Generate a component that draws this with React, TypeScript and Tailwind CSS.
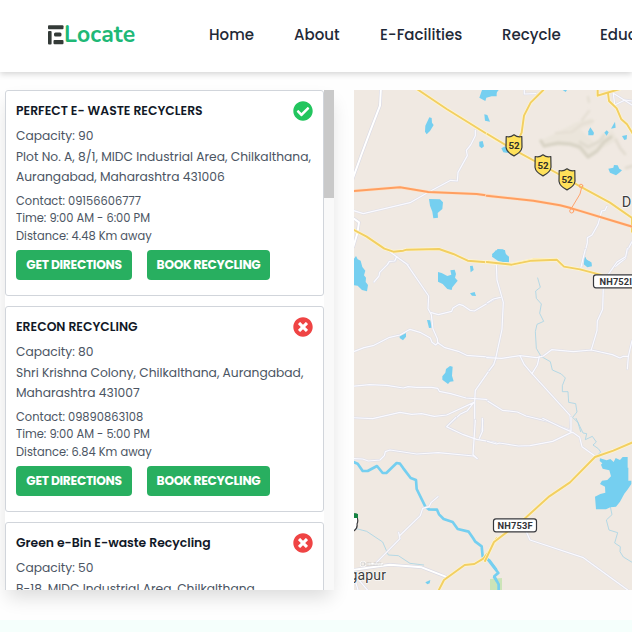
import { FaCheckCircle, FaTimesCircle } from "react-icons/fa";

type Facility = {
  name: string;
  open: boolean;
  capacity: number;
  address: string[];
  contact: string;
  time: string;
  distance: string;
};

const facilities: Facility[] = [
  {
    name: "PERFECT E- WASTE RECYCLERS",
    open: true,
    capacity: 90,
    address: ["Plot No. A, 8/1, MIDC Industrial Area, Chilkalthana,", "Aurangabad, Maharashtra 431006"],
    contact: "09156606777",
    time: "9:00 AM - 6:00 PM",
    distance: "4.48",
  },
  {
    name: "ERECON RECYCLING",
    open: false,
    capacity: 80,
    address: ["Shri Krishna Colony, Chilkalthana, Aurangabad,", "Maharashtra 431007"],
    contact: "09890863108",
    time: "9:00 AM - 5:00 PM",
    distance: "6.84",
  },
  {
    name: "Green e-Bin E-waste Recycling",
    open: false,
    capacity: 50,
    address: ["B-18, MIDC Industrial Area, Chilkalthana,", "Aurangabad, Maharashtra 431006"],
    contact: "09325373737",
    time: "9:00 AM - 6:00 PM",
    distance: "7.12",
  },
];

const navItems = [
  { label: "Home", width: "w-[45px]" },
  { label: "About", width: "w-[46px]" },
  { label: "E-Facilities", width: "w-[82px]" },
  { label: "Recycle", width: "w-[58px]" },
  { label: "Education", width: "w-[80px]" },
];

// The map is traced in six tiles, each at three units per pixel.
type Tile = { at: string; major?: string[]; minor?: string[]; yellow?: string[]; orange?: string[]; water?: string[]; river?: string[]; stream?: string[] };

const tiles: Tile[] = [
  {
    at: "translate(-4 -5) scale(0.33333)",
    major: ["M93 5L90 62L60 140L35 207L8 282", "M8 398L27 412L22 445L10 485"],
    minor: ["M376 135V152L362 180L349 196L352 212L324 262L322 288L302 286L235 322L180 353L40 386L8 376", "M112 540L120 530L136 528L138 515L176 540"],
    yellow: ["M190 5L205 15L290 72L440 165", "M8 433L50 455L103 491L130 500L160 497L170 494L267 492L310 507L353 527L438 534"],
    orange: ["M8 318L150 307L235 321L380 327L440 335"],
    water: [
      "M238 97L245 99L246 113L251 120L240 138L230 148L225 140L226 122Z",
      "M237 342L270 343L279 352L277 372L263 384L264 398L250 400L247 380L240 362Z",
      "M396 15H440V34H425L409 38L406 48L388 38Z",
      "M403 88L412 90L420 110L405 107Z",
      "M388 170L398 168L402 184L395 190L388 184Z",
    ],
  },
  {
    at: "translate(136 -5) scale(0.33333)",
    minor: ["M103 12V27L138 26", "M370 25L374 60L405 45L426 48", "M370 25L426 60", "M351 364L345 376L335 378L324 418L306 450L292 458L292 474L280 520L277 542", "M426 470L413 494L406 520L375 545"],
    yellow: ["M82 170L95 143L102 92L122 53L160 15", "M323 12V32L349 24L390 12", "M354 24L357 48L380 70L394 103L411 118L430 149", "M-8 147L60 188L200 264L270 304L360 353L426 399V440", "M-5 530L60 539L130 524H200L215 540"],
    orange: ["M-10 332L130 347L210 361L245 370L430 426"],
    water: [
      "M-8 15H26L14 31L-5 26Z",
      "M218 15H231L227 21Z",
      "M301 127L312 143L310 151H295V139Z",
      "M375 110L377 128L363 131Z",
      "M343 143L350 136L356 142L350 152Z",
      "M396 153L411 150L410 163L403 165Z",
      "M355 251L370 248L372 240L383 241L388 251L396 256L388 263L378 271L360 263Z",
      "M34 190L45 184L58 205L40 202Z",
      "M8 505L20 500L22 492L40 493L47 507L57 520V532L30 532L6 515Z",
      "M282 509L290 524L304 532V540L280 535Z",
    ],
  },
  {
    at: "translate(-4 160) scale(0.33333)",
    minor: [
      "M72 96L87 78L89 67L112 44L118 34L134 33L140 20",
      "M112 0L140 20L171 43L236 138L234 176L244 194L249 237L262 266L263 278L285 293L325 304L350 316L440 323",
      "M244 188L265 194L305 184L309 174L328 163L340 167L360 181L373 183L438 145",
      "M8 306L42 293L72 286L116 263L150 255L180 238L210 247L241 264L246 277L257 285L264 278",
      "M8 409L58 404L110 406L160 414L174 410L200 412H245L263 415L268 424L302 431L348 444L408 448L438 470",
      "M440 320L430 344L376 421L374 455V545",
      "M8 503L68 506L150 487L185 493L215 491L253 499L290 495L372 457L352 482L330 493L290 530L312 542",
      "M399 511L394 545",
    ],
    water: [
      "M12 26L18 18L23 28L32 32L37 51L46 62L42 76L48 83L47 96L54 105L51 124L36 120L23 107L12 106Z",
      "M264 66L275 69L292 78L304 74L301 61L314 59L318 72L315 83L323 92L307 112L305 120L292 117L278 102L264 95Z",
      "M360 48L368 47L371 60L362 67Z",
      "M360 130L374 126L378 138L366 137Z",
      "M438 0L427 14L438 27Z",
      "M231 210L241 211L245 233L237 234Z",
      "M149 258L168 249V260L159 271L149 264Z",
      "M300 348L308 350L306 377L311 394L300 395L294 402L277 389V379L286 368L288 357Z",
    ],
  },
  {
    at: "translate(136 160) scale(0.33333)",
    minor: [
      "M19 42L21 90L40 157L36 238L17 325L11 344L-3 362",
      "M-8 158L10 147L31 142",
      "M-10 323L35 325L90 317L140 323L160 318L185 299L250 305L304 300L367 314L390 324L400 319H415L426 272",
      "M415 319L412 357",
      "M90 317L103 344L126 371L240 496L243 545",
      "M148 320L142 345L126 371",
      "M304 299L321 242L322 213L338 178L340 110L355 73L381 36L407 20L412 -5",
      "M272 55L278 30L286 -2",
      "M-6 454L37 481L82 486L108 498L170 513L240 540",
    ],
    yellow: ["M-10 36L65 44L125 32L200 29L222 50L270 58L330 74L426 112"],
    water: ["M6 14L20 0H45L47 12L57 20V35H33Z", "M281 13L290 30L304 38L306 49L292 52L280 42Z"],
    stream: ["M143 84L151 112L137 123L139 145L154 162L149 190L161 214L141 223L136 245L139 295L153 319L181 335L187 360L214 372L226 384L217 407V425H234L236 457L257 461L261 486L248 502L264 518L272 545"],
  },
  {
    at: "translate(-4 330) scale(0.33333)",
    major: ["M8 450L120 434L215 442L287 470"],
    minor: [
      "M8 116L38 117L55 123L90 120L103 107L106 95L120 90L200 102L265 98L371 108L382 116L369 104L376 0",
      "M318 -8L290 20L340 44L380 58L438 68", "M397 -5L398 32L388 55",
      "M264 230L243 248L237 260L218 265L211 287L148 348L146 337L150 356L77 430", "M25 478L55 513", "M12 470L25 513",
    ],
    yellow: ["M264 515L282 480L344 435L373 432L400 416L418 393L440 355"],
    river: ["M8 125L23 131L38 153H53L81 138L98 159H109L140 129L150 131L160 145L182 174L198 180L200 207L226 260L237 268L261 269L267 283L281 297L308 306L323 327L356 335L369 354L376 365L395 379L398 410L419 422L438 448"],
    stream: ["M8 323L50 334L98 366L115 405L145 407L180 430L221 435"],
    water: ["M226 487L241 480L239 490L232 493Z", "M438 460L428 472L438 486Z"],
  },
  {
    at: "translate(136 330) scale(0.33333)",
    minor: [
      "M-8 64L20 72L28 69L85 78L120 77L188 64L243 38L248 37L269 52L276 80L318 110",
      "M158 -5L210 20L243 35V-8",
      "M105 326L120 360L280 413L420 515",
    ],
    yellow: ["M-15 423L12 366L107 293L178 229L240 187L315 111L370 92L430 66"],
    river: ["M-5 420L8 437L25 459L13 469L26 493V515"],
    stream: ["M258 -5L270 20L279 39L290 41L286 59L307 49L319 66L309 75L325 86L332 96L322 106", "M361 260L366 284L349 300L357 330L383 338L374 369L391 380L390 395L400 411L428 428"],
    water: ["M330 115L350 121L361 117L371 126L377 114L390 120L398 111H413V143H415V182H424V192L414 207L403 221L390 245L378 260L361 262L348 268H318L315 230L331 222L346 218L345 200L330 192L336 182L352 180L363 169L358 151L338 146L333 134L337 130L329 123Z"],
  },
];

function Shield({ x, y }: { x: number; y: number }) {
  return (
    <g transform={`translate(${x} ${y})`}>
      <path d="M-7.8 -8.8Q-4 -7.4 0 -10.5Q4 -7.4 7.8 -8.8L8 2Q7.4 7 0 10.6Q-7.4 7 -8 2Z" fill="#ffe15a" stroke="#393b3c" strokeWidth="1.2" />
      <text y="3.8" textAnchor="middle" fontFamily="Roboto, sans-serif" fontSize="9.8" fontWeight="700" fill="#30302a">52</text>
    </g>
  );
}

function MapView() {
  return (
    <svg className="block h-[500px] w-[278px] shrink-0" viewBox="0 0 278 500" strokeLinejoin="round" strokeLinecap="round">
      <defs>
        <filter id="relief" x="-20%" y="-20%" width="140%" height="140%"><feGaussianBlur stdDeviation="1.2" /></filter>
      </defs>
      <rect width="278" height="500" fill="#f0e9e2" />
      <g filter="url(#relief)" fill="none">
        <path d="M188 50L204 42L221 33L238 28L239 34L226 39L240 52L258 40L264 50L245 60L234 69L220 56L190 56Z" fill="#ebe5db" />
        <path d="M202 43L218 42L228 34L239 31M228 30L235 21M234 7L235 12" stroke="#e5dfd4" strokeWidth="2.5" />
        <path d="M187 51L190 56L204 53L216 54L226 57L234 67L243 61L250 52L257 47" stroke="#d9d4c6" strokeWidth="3.4" />
        <path d="M226 52L234 57L246 51L250 45" stroke="#e0dbcf" strokeWidth="3" />
        <path d="M262 50L266 58L271 64M272 78L278 76" stroke="#e3ddd2" strokeWidth="3" />
      </g>
      <path d="M136 489L148 488V500H136Z" fill="#cce4b8" />
      {tiles.map((t) => (
        <g key={t.at} transform={t.at} fill="none">
          {t.stream?.map((d) => <path key={d} d={d} stroke="#aad5e5" strokeWidth="2.6" />)}
          {t.river?.map((d) => <path key={d} d={d} stroke="#75cff0" strokeWidth="8" />)}
          {t.water?.map((d) => <path key={d} d={d} fill="#75cff0" />)}
        </g>
      ))}
      {tiles.map((t) => (
        <g key={t.at} transform={t.at} fill="none">
          {t.minor?.map((d) => <path key={d} d={d} stroke="#dfdfe8" strokeWidth="7" />)}
          {t.major?.map((d) => <path key={d} d={d} stroke="#d9d9e4" strokeWidth="9.5" />)}
          {t.minor?.map((d) => <path key={d} d={d} stroke="#fafaff" strokeWidth="3.6" />)}
          {t.major?.map((d) => <path key={d} d={d} stroke="#ffffff" strokeWidth="6" />)}
        </g>
      ))}
      {tiles.map((t) => (
        <g key={t.at} transform={t.at} fill="none">
          {t.yellow?.map((d) => <path key={d} d={d} stroke="#fff5cf" strokeWidth="10" />)}
          {t.yellow?.map((d) => <path key={d} d={d} stroke="#f2cf62" strokeWidth="5.8" />)}
          {t.orange?.map((d) => <path key={d} d={d} stroke="#ffe0c4" strokeWidth="9.5" />)}
          {t.orange?.map((d) => <path key={d} d={d} stroke="#ff9f61" strokeWidth="6" />)}
        </g>
      ))}
      <g fill="none" stroke="#ffa36c">
        <path d="M227.5 98L226 104L217 119" />
        <circle cx="227" cy="96" r="1.8" />
        <circle cx="217.7" cy="121" r="2" />
      </g>
      <Shield x={160} y={55.3} />
      <Shield x={189} y={75.3} />
      <Shield x={213} y={89.3} />
      <g stroke="#37383c" strokeWidth="1.2" fill="#ffffff">
        <rect x="239.5" y="184.8" width="50" height="13" rx="2.5" />
        <rect x="139.5" y="428.8" width="43" height="13" rx="2.5" />
        <path d="M-2 426L2 424Q5 430 3 434Q4 439 -2 442Z" />
      </g>
      <path d="M0 423L4 424V428H0Z" fill="#168443" />
      <g fontFamily="Roboto, sans-serif" fontWeight="700" fontSize="9.3" fill="#333438">
        <text x="245.5" y="194.7" textLength="32.5">NH752I</text>
        <text x="143.5" y="438.7" textLength="35">NH753F</text>
      </g>
      <g fontFamily="Roboto, sans-serif" fill="#3c3c3c" stroke="#ffffff" strokeWidth="1.2" paintOrder="stroke">
        <text x="267.8" y="116.6" fontSize="14.5">D</text>
        <text x="-4.5" y="490.2" fontSize="14" textLength="36.5">gapur</text>
      </g>
      <g fill="none" stroke="#ffffff" strokeWidth="2">
        <circle cx="9" cy="474" r="2" />
        <path d="M14 474H28" />
      </g>
      <g fill="none" stroke="#b8b6b4" strokeWidth=".6">
        <circle cx="9" cy="474" r="2" />
        <path d="M13 475H29M13 473H17M20 473H27" strokeDasharray="2 1" />
      </g>
    </svg>
  );
}

function FacilityCard({ facility: f }: { facility: Facility }) {
  const Status = f.open ? FaCheckCircle : FaTimesCircle;
  return (
    <article className="h-[206px] shrink-0 rounded-[3px] border border-[#d1d5db] bg-white px-[10px] pt-[9px] text-[#4b5563]">
      <div className="flex h-[22px] items-center justify-between">
        <h2 className="pt-px whitespace-nowrap text-[12.4px] font-semibold text-[#111827]">{f.name}</h2>
        <Status className={f.open ? "size-5 text-[#22c55e]" : "size-5 text-[#ef4444]"} />
      </div>
      <div className="mt-[4px] whitespace-nowrap text-[12.28px] leading-[20.5px]">
        <p>Capacity: {f.capacity}</p>
        {f.address.map((line) => <p key={line}>{line}</p>)}
      </div>
      <div className="mt-[5px] whitespace-nowrap text-[11.45px] leading-[17.5px]">
        <p>Contact: {f.contact}</p>
        <p>Time: {f.time}</p>
        <p>Distance: {f.distance} Km away</p>
      </div>
      <div className="mt-[5px] flex gap-[15px] whitespace-nowrap text-[12.25px] font-bold tracking-[-0.3px] text-white">
        <button className="h-[30px] w-[116px] rounded-[4px] bg-[#28af60] pt-px">GET DIRECTIONS</button>
        <button className="h-[30px] w-[123px] rounded-[4px] bg-[#28af60] pt-px">BOOK RECYCLING</button>
      </div>
    </article>
  );
}

function Logo() {
  return (
    <div className="flex w-[161px] shrink-0 items-center">
      <svg className="h-5 w-4" viewBox="0 0 16 20" fill="#343b38">
        <rect x="0" y="0.3" width="15.5" height="4" rx="1" />
        <rect x="0" y="6" width="3.6" height="13.5" rx="1" />
        <rect x="6" y="7.5" width="7.5" height="4" rx="1.5" />
        <rect x="5.5" y="15" width="10" height="4.3" rx="1" />
      </svg>
      <span className="font-['Nunito','Lato',sans-serif] text-[23px] leading-none font-bold tracking-[0.1px] text-[#20b876]">Locate</span>
    </div>
  );
}

export default function App() {
  return (
    <div className="flex h-[632px] w-[632px] flex-col overflow-hidden bg-[#fefefe] font-['Poppins','Inter',sans-serif]">
      <header className="z-10 flex h-[72px] shrink-0 items-center bg-white pb-[3px] pl-12 shadow-[0_2px_6px_rgba(0,0,0,0.17)]">
        <Logo />
        <nav className="flex gap-10 pt-px text-[15px] font-medium text-[#1f2937]">
          {navItems.map((item) => (
            <a key={item.label} className={`shrink-0 whitespace-nowrap ${item.width}`}>{item.label}</a>
          ))}
        </nav>
      </header>
      <main className="flex h-[548px] shrink-0 items-start gap-5 pt-[18px] pl-[5px]">
        <section className="flex h-[500px] w-[329px] shrink-0 bg-white shadow-[0_10px_18px_-3px_rgba(0,0,0,0.14)]">
          <div className="flex h-full w-[319px] flex-col gap-[10px] overflow-hidden">
            {facilities.map((f) => <FacilityCard key={f.name} facility={f} />)}
          </div>
          <div className="h-full w-[10px] bg-[#f9f9f9]">
            <div className="h-[108px] bg-[#c9c9c9]" />
          </div>
        </section>
        <MapView />
      </main>
      <footer className="h-3 shrink-0 bg-[#f5fffc]" />
    </div>
  );
}
